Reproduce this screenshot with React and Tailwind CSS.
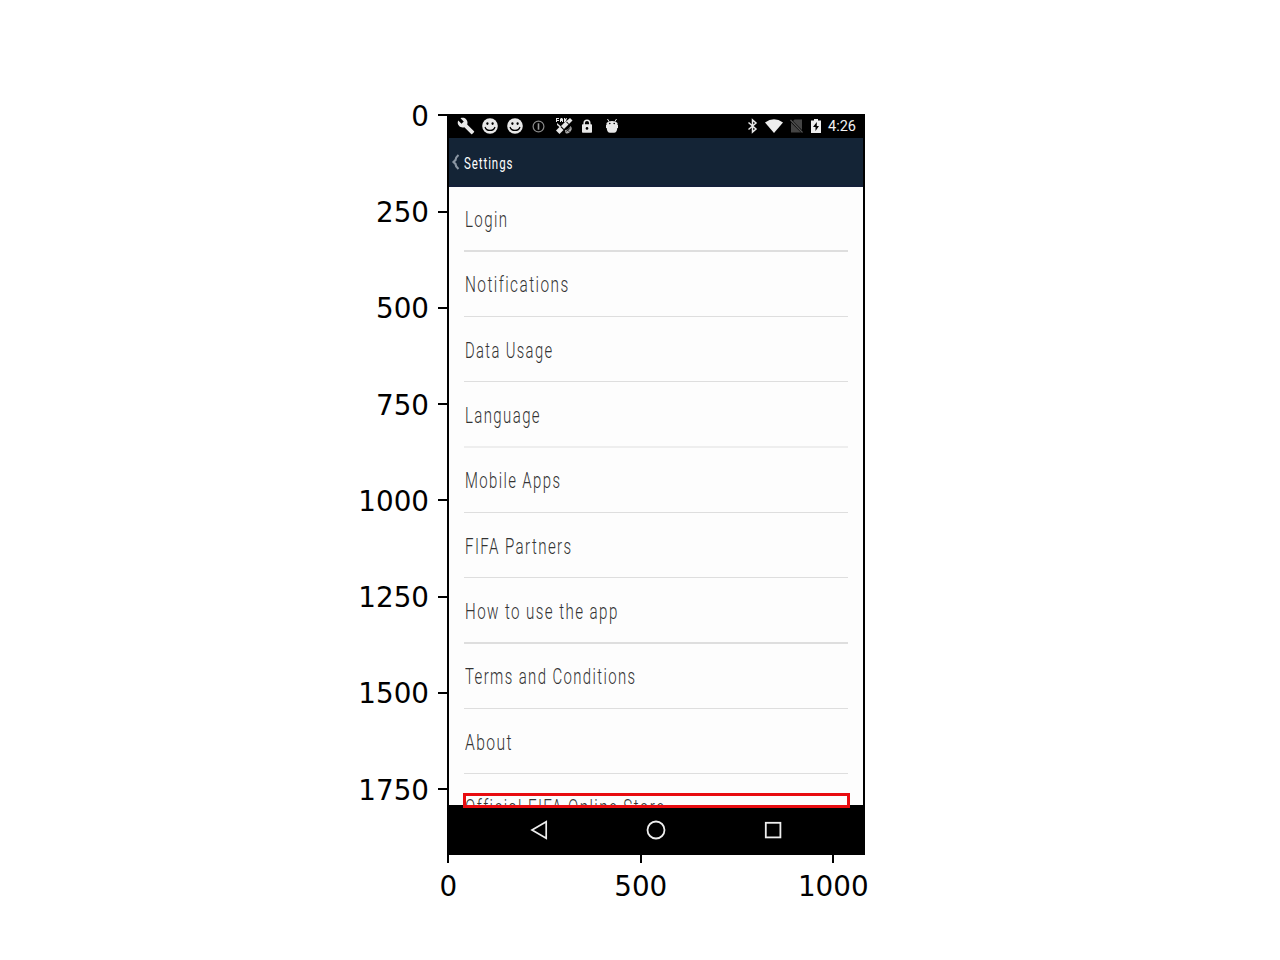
import React, { useLayoutEffect, useRef, useState } from "react";

function FitText({ width, className, children }) {
  const ref = useRef(null);
  const [scale, setScale] = useState(1);
  useLayoutEffect(() => {
    setScale(width / ref.current.offsetWidth);
  }, [width]);
  return (
    <span
      ref={ref}
      className={"inline-block origin-left whitespace-nowrap " + className}
      style={{ transform: `scaleX(${scale})` }}
    >
      {children}
    </span>
  );
}

const rows = [
  { text: "Login", width: 43.5, box: "h-[65px]", inner: "h-[43px]", line: "h-[2px] bg-[#dedede]" },
  { text: "Notifications", width: 104.5, box: "h-[65px]", inner: "h-[44px]", line: "h-px bg-[#dedede]" },
  { text: "Data Usage", width: 88.5, box: "h-[65px]", inner: "h-[43px]", line: "h-px bg-[#dedede]" },
  { text: "Language", width: 76, box: "h-[66px]", inner: "h-[43px]", line: "h-[2px] bg-[#eeeeee]" },
  { text: "Mobile Apps", width: 96.5, box: "h-[65px]", inner: "h-[44px]", line: "h-px bg-[#dedede]" },
  { text: "FIFA Partners", width: 107.5, box: "h-[65px]", inner: "h-[43px]", line: "h-px bg-[#dedede]" },
  { text: "How to use the app", width: 153.5, box: "h-[66px]", inner: "h-[43px]", line: "h-[2px] bg-[#dedede]" },
  { text: "Terms and Conditions", width: 171.5, box: "h-[65px]", inner: "h-[44px]", line: "h-px bg-[#dedede]" },
  { text: "About", width: 48, box: "h-[65px]", inner: "h-[43px]", line: "h-px bg-[#dedede]" },
];

const yTicks = ["0", "250", "500", "750", "1000", "1250", "1500", "1750"];
const xTicks = ["0", "500", "1000"];

const itemText =
  "font-['Roboto'] font-light text-[21.5px] leading-[26px] tracking-[2px] text-[#333333]";

function Smiley() {
  return (
    <svg width="16" height="16" viewBox="0 0 16 16">
      <circle cx="8" cy="8" r="7.8" fill="#e8e8e8" />
      <ellipse cx="5.4" cy="5.6" rx="1.1" ry="1.4" fill="#000" />
      <ellipse cx="10.6" cy="5.6" rx="1.1" ry="1.4" fill="#000" />
      <path d="M3 9C4.4 13.6 11.600 13.600 13 9" fill="none" stroke="#000" strokeWidth="1.200" />
    </svg>
  );
}

function StatusBar() {
  return (
    <div className="flex h-[22px] items-center bg-black pb-[2px] pl-[8px] pr-[7px]">
      <svg width="18" height="18" viewBox="0 0 24 24" fill="#e8e8e8">
        <path d="M22.7 19l-9.1-9.1c.9-2.3.4-5-1.5-6.9-2-2-5-2.4-7.4-1.3L9 6 6 9 1.6 4.7C.4 7.1.9 10.1 2.9 12.1c1.9 1.9 4.6 2.4 6.9 1.5l9.1 9.1c.4.4 1 .4 1.4 0l2.3-2.3c.5-.4.5-1.1.1-1.4z" />
      </svg>
      <div className="ml-[7px] flex gap-[9px]">
        <Smiley />
        <Smiley />
      </div>
      <svg className="ml-[9px]" width="13" height="13" viewBox="0 0 13 13">
        <circle cx="6.500" cy="6.500" r="5.400" fill="none" stroke="#8a8a8a" strokeWidth="1.200" />
        <path d="M6.500 3.300v6.400" stroke="#9a9a9a" strokeWidth="1.600" />
      </svg>
      <svg className="ml-[10px]" width="18" height="18" viewBox="0 0 18 18" fill="#e8e8e8">
        <path d="M1 1h3v1H2v1h2v1H2v1H1zM5 5V2l1-1h1l1 1v3H7V4H6v1zM9 1h1v1l2-1v1l-1 1 1 2h-1L10 4v1H9z" />
        <path d="M6 9l4.500-4.500 3 3L9 12z" />
        <path d="M11.500 4L15 1l2.500 2.500L14 7z" />
        <path d="M1 13.500L5 9.500l3.500 3.500L4.500 17z" />
        <path d="M2 6l4 3.500-1 1L2 8z" />
        <path d="M10 13Q13.500 13 15.500 9Q18 11.500 15.500 14.500T10.500 16z" fill="#aaa" />
        <path d="M11 14.500l4.500-3.500M12 12.500l2.500 2.500" stroke="#000" strokeWidth=".7" />
      </svg>
      <svg className="ml-[8px]" width="12" height="14" viewBox="0 0 12 14">
        <path d="M3.200 6V4a2.800 2.800 0 015.600 0v2" fill="none" stroke="#e8e8e8" strokeWidth="1.500" />
        <rect x="1" y="5.200" width="10" height="8.600" rx=".8" fill="#e8e8e8" />
        <circle cx="6" cy="9.400" r="1.300" fill="#000" />
      </svg>
      <svg className="ml-[12px]" width="14" height="14" viewBox="0 0 14 14">
        <path d="M2.500 0l1.500 2.500M11.500 0L10 2.500" stroke="#e8e8e8" />
        <path d="M1.500 6V4Q3 2 7 2T12.500 4V6zM1 6h12v3H12.300Q12 13.700 9 13.700H5Q2 13.700 1.700 9H1z" fill="#e8e8e8" />
        <circle cx="4.800" cy="4.500" r=".8" />
        <circle cx="9.200" cy="4.500" r=".8" />
      </svg>
      <div className="ml-auto flex items-center">
        <svg width="11" height="16" viewBox="0 0 11 16">
          <path d="M1.500 4.500L9 11 5.500 14V2L9 5 1.500 11.500" fill="none" stroke="#e8e8e8" strokeWidth="1.500" />
        </svg>
        <svg className="ml-[7px]" width="18" height="14" viewBox="0 0 18 14">
          <path d="M0 3.500Q9-3 18 3.500L9 14z" fill="#eee" />
        </svg>
        <svg className="ml-[7px]" width="13" height="14" viewBox="0 0 13 14">
          <path d="M4.500 .5H12v10.500L3 2zM1 3.500L11 13.500H1z" fill="#444" />
          <path d="M.5 1l12 12.500" stroke="#555" strokeWidth="1.200" />
        </svg>
        <svg className="ml-[8px]" width="10" height="14" viewBox="0 0 10 14">
          <path d="M0 1.500h3V0h4v1.500h3V14H0z" fill="#eee" />
          <path d="M5.800 3L2 8h2.500v4L8 7H5.800z" fill="#000" />
        </svg>
        <span className="ml-[7px] pt-[2px] font-['Roboto'] text-[14.500px] leading-[20px] text-[#f2f2f2]">4:26</span>
      </div>
    </div>
  );
}

export default function App() {
  return (
    <div className="h-[960px] w-[1280px] overflow-hidden bg-white font-['DejaVu_Sans'] text-[27.78px] leading-[32px] text-black">
      <div className="flex h-[855px] items-start">
        <div className="mt-[67.25px] flex w-[447px] flex-col">
          {yTicks.map((t) => (
            <div key={t} className="flex h-[96.25px] items-center justify-end">
              <span className="mr-[9px] pt-[3px]">{t}</span>
              <span className="h-[2px] w-[9px] bg-black" />
            </div>
          ))}
        </div>
        <div className="relative mt-[114px] flex h-[741px] w-[418px] flex-col border-2 border-black bg-[#fdfdfd]">
          <StatusBar />
          <div className="flex h-[49px] items-center border-b-2 border-[#14203a] bg-[#142436] pl-[2px]">
            <svg width="10" height="16" viewBox="0 0 10 16">
              <path d="M7.500 1Q4.500 3.500 4.500 6L2.500 8L4.500 10Q4.500 12.500 7.500 15" fill="none" stroke="#8b96a3" strokeWidth="2.200" />
            </svg>
            <div className="ml-[3px] flex pt-[4px]">
              <FitText width={49.5} className="font-['Roboto'] text-[16px] leading-[20px] tracking-[1.3px] text-white">Settings</FitText>
            </div>
          </div>
          <div className="flex h-[618px] flex-col overflow-hidden px-[15px]">
            {rows.map((r) => (
              <div key={r.text} className={"flex shrink-0 flex-col justify-end " + r.box}>
                <div className={"flex items-start pl-[0.5px] " + r.inner}>
                  <FitText width={r.width} className={itemText}>{r.text}</FitText>
                </div>
                <div className={"shrink-0 " + r.line} />
              </div>
            ))}
            <div className="flex pl-[0.5px] pt-[21px]">
              <FitText width={200.5} className={itemText}>Official FIFA Online Store</FitText>
            </div>
          </div>
          <div className="flex h-[48px] items-center bg-black pl-[81px] pt-[2px]">
            <svg width="18" height="20" viewBox="0 0 18 20">
              <path d="M16.200 1.800v16.400L2 10z" fill="none" stroke="#eee" strokeWidth="1.700" />
            </svg>
            <svg className="ml-[98px]" width="20" height="20" viewBox="0 0 20 20">
              <circle cx="10" cy="10" r="8.500" fill="none" stroke="#eee" strokeWidth="1.800" />
            </svg>
            <svg className="ml-[98px]" width="18" height="18" viewBox="0 0 18 18">
              <rect x="1.800" y="1.800" width="14.600" height="14.600" fill="none" stroke="#eee" strokeWidth="1.800" />
            </svg>
          </div>
          <div className="absolute left-[14px] top-[677px] h-[15px] w-[387px] border-[3px] border-[#e80c10]" />
        </div>
      </div>
      <div className="flex pl-[352px]">
        {xTicks.map((t) => (
          <div key={t} className="flex w-[192.500px] flex-col items-center">
            <span className="h-[8px] w-[2px] bg-black" />
            <span className="mt-[8px]">{t}</span>
          </div>
        ))}
      </div>
    </div>
  );
}
